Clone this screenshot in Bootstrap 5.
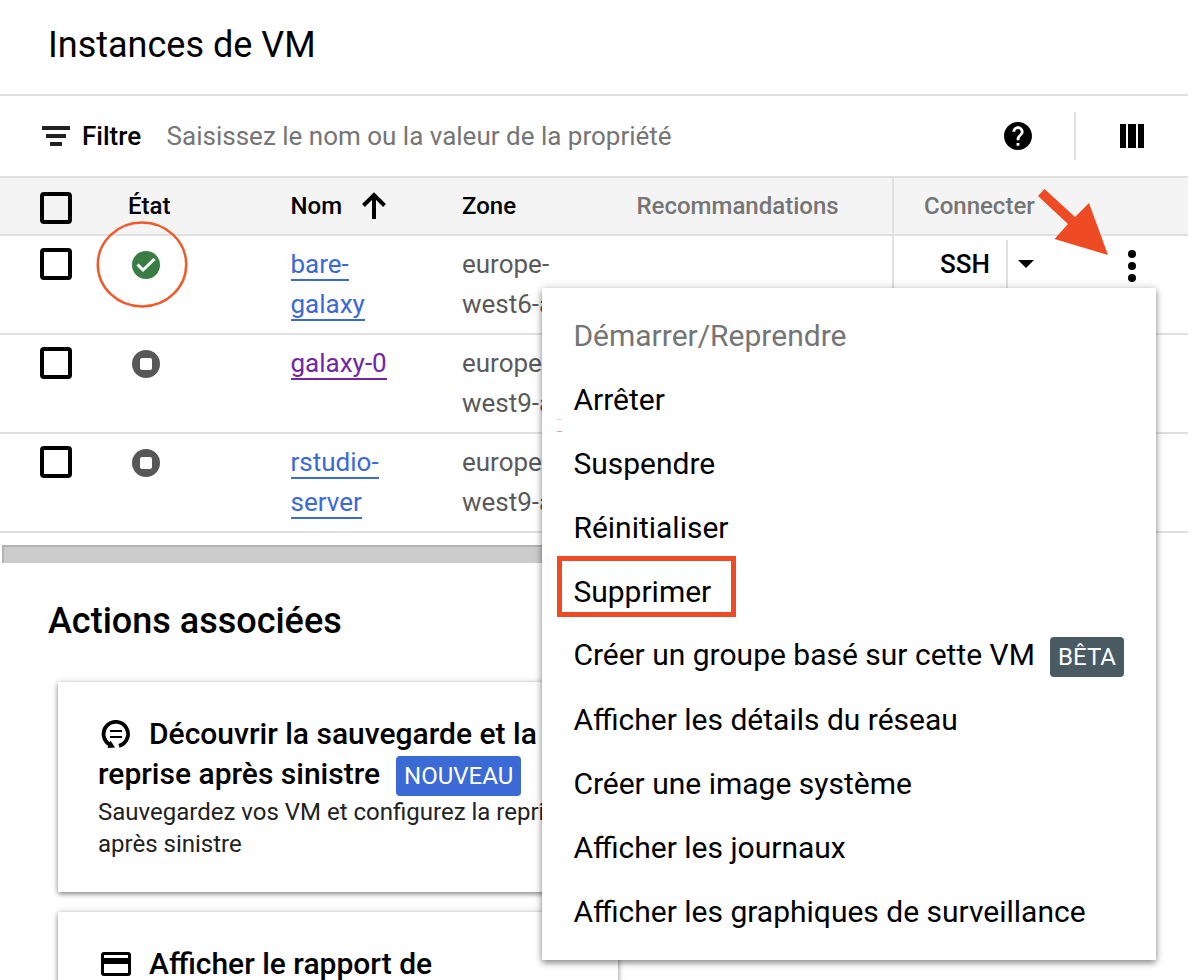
<!DOCTYPE html>
<html lang="fr">
<head>
<meta charset="utf-8">
<meta name="viewport" content="width=device-width, initial-scale=1">
<title>Instances de VM</title>
<link rel="stylesheet" href="https://cdn.jsdelivr.net/npm/bootstrap@5.3.0/dist/css/bootstrap.min.css">
<style>
body{font-family:Roboto,sans-serif;color:#000;background:#fff;height:980px;overflow:hidden}
.page{width:1188px;height:980px}
.rule{border-bottom:2px solid #e0e0e0}
.head{height:96px;padding:0 0 5px 48px}
.ttl{font-size:36px;font-weight:400;line-height:44px}
.filter{height:82px;padding-left:42px;font-size:26px}
.flabel{font-weight:500;margin-left:12px}
.ph{color:#757575;margin-left:25.5px}
.vsep{width:2px;height:48px;background:#e0e0e0;margin:0 44px 0 42px}
.vm{table-layout:fixed;width:1188px;border-collapse:separate;border-spacing:0}
.vm th{height:58px;background:#f4f4f4;border-bottom:2px solid #e0e0e0;font-size:24px;font-weight:500;line-height:36px;padding:0;vertical-align:middle}
.vm td{height:99px;border-bottom:2px solid #e0e0e0;font-size:26px;line-height:40px;padding:8px 0 0;vertical-align:top;color:#5a5a5a}
.vm .conn{border-left:2px solid #e0e0e0}
.vm th.dim{color:#757575}
.vm th.conn{padding-left:30px}
.cb{display:block;width:32px;height:32px;border:4px solid #000;border-radius:4px;margin:4px 0 0 40px}
.st{display:block;margin:7px 0 0 4px}
.lnk{color:#3b69d6;text-decoration:none;border-bottom:2px solid #3b69d6}
.lnk.seen{color:#7127a5;border-color:#7127a5}
.ssh{color:#000;font-weight:500;margin-left:46px;width:66px}
.split{width:2px;height:54px;margin-top:-4px;background:#e0e0e0}
.hbar{width:900px;height:18px;margin:12px 0 0 2px;background:#ccc;border-top:2px solid #b3b3b3;border-left:2px solid #b3b3b3}
.sub{font-size:36px;font-weight:500;line-height:44px;margin:36px 0 0 48px}
.tile{width:560px;height:210px;margin:20px 0 0 58px;background:#fff;box-shadow:0 2px 5px rgba(0,0,0,.42),0 0 9px rgba(0,0,0,.12);padding:32px 20px 0 40px;border-radius:1px}
.sub + .tile{margin-top:39px}
.tile h3{font-size:30px;font-weight:500;line-height:40px;margin:0;white-space:nowrap}
.tile h3 svg{margin:-4px 18px 0 3px}
.tile p{font-size:24px;line-height:32px;color:#212121;margin:2px 0 0}
.tag{display:inline-block;font-size:24px;font-weight:400;line-height:40px;height:40px;padding:0 8px;border-radius:4px;color:#fff;margin-left:16px}
.tag-new{background:#3b69d6;vertical-align:top;margin-top:2px;margin-bottom:-2px}
.ctx{left:542px;top:288px;width:614px;height:672px;background:#fff;padding:16px 0;box-shadow:0 3px 6px rgba(0,0,0,.4),0 0 10px rgba(0,0,0,.14);z-index:2}
.ctx li{height:64px;line-height:64px;font-size:30px;padding-left:31.4px;white-space:nowrap}
.ctx li.d-flex{line-height:62px;align-items:flex-start}
.tag-beta{background:#495a62;margin:13px 0 0 15.2px}
.ctx .off{color:#757575}
.marks{left:0;top:0;z-index:3;pointer-events:none}
</style>
</head>
<body>
<div class="page position-relative overflow-hidden">
  <header class="head rule d-flex align-items-center"><h1 class="ttl m-0">Instances de VM</h1></header>
  <div class="filter rule d-flex align-items-center">
    <svg width="28" height="20" viewBox="0 0 28 20" fill="#212121"><path d="M0 0h28v4H0zM4 8h20v4H4zM8 16h12v4H8z"/></svg>
    <span class="flabel">Filtre</span>
    <span class="ph">Saisissez le nom ou la valeur de la propriété</span>
    <div class="d-flex align-items-center ms-auto">
      <svg width="28" height="28" viewBox="2 2 20 20"><path d="M12 2C6.480 2 2 6.480 2 12s4.480 10 10 10 10-4.480 10-10S17.520 2 12 2zm1 17h-2v-2h2v2zm2.070-7.750-.9.920C13.450 12.900 13 13.500 13 15h-2v-.5c0-1.100.450-2.100 1.170-2.830l1.240-1.260c.370-.360.590-.860.590-1.410 0-1.100-.9-2-2-2s-2 .9-2 2H8c0-2.210 1.790-4 4-4s4 1.790 4 4c0 .880-.360 1.680-.930 2.250z"/></svg>
      <div class="vsep"></div>
      <svg width="24" height="24" viewBox="0 0 24 24" style="margin-right:44px"><path d="M0 0h6v24H0zM8 0h8v24H8zM18 0h6v24h-6z"/></svg>
    </div>
  </div>
  <table class="vm">
    <colgroup><col style="width:128px"><col style="width:162.500px"><col style="width:171.500px"><col style="width:174.500px"><col style="width:255.500px"><col></colgroup>
    <thead><tr>
      <th><span class="cb"></span></th><th>État</th>
      <th>Nom<svg width="24" height="27" viewBox="0 0 24 27" fill="none" stroke="#000" stroke-width="4" style="margin:-3px 0 1px 20px"><path d="M12 27V4M1.500 13.500 12 3l10.500 10.500"/></svg></th>
      <th>Zone</th><th class="dim">Recommandations</th><th class="dim conn">Connecter</th>
    </tr></thead>
    <tbody>
      <tr><td><span class="cb"></span></td>
        <td><svg class="st" width="28" height="28" viewBox="0 0 28 28"><circle cx="14" cy="14" r="14" fill="#3a7d44"/><path d="M5.500 13.500 11 19 22.500 8" fill="none" stroke="#fff" stroke-width="3"/></svg></td>
        <td><span class="lnk">bare-</span><br><span class="lnk">galaxy</span></td><td>europe-<br>west6-a</td><td></td>
        <td class="conn"><div class="d-flex"><span class="ssh">SSH</span><span class="split"></span>
          <svg width="16" height="8" viewBox="0 0 16 8" style="margin:16px 0 0 10px"><path d="M0 0h16L8 8z"/></svg>
          <svg width="8" height="32" viewBox="0 0 8 32" style="margin:6px 0 0 94px"><circle cx="4" cy="4" r="4"/><circle cx="4" cy="16" r="4"/><circle cx="4" cy="28" r="4"/></svg></div></td></tr>
      <tr><td><span class="cb"></span></td>
        <td><svg class="st" width="28" height="28" viewBox="0 0 28 28"><circle cx="14" cy="14" r="14" fill="#575757"/><rect x="8" y="8" width="12" height="12" rx="2" fill="#fff"/></svg></td>
        <td><span class="lnk seen">galaxy-0</span></td><td>europe-<br>west9-a</td><td></td><td class="conn"></td></tr>
      <tr><td><span class="cb"></span></td>
        <td><svg class="st" width="28" height="28" viewBox="0 0 28 28"><circle cx="14" cy="14" r="14" fill="#575757"/><rect x="8" y="8" width="12" height="12" rx="2" fill="#fff"/></svg></td>
        <td><span class="lnk">rstudio-</span><br><span class="lnk">server</span></td><td>europe-<br>west9-a</td><td></td><td class="conn"></td></tr>
    </tbody>
  </table>
  <div class="hbar"></div>
  <h2 class="sub">Actions associées</h2>
  <section class="tile">
    <h3><svg width="30" height="30" viewBox="0 0 30 30" fill="none" stroke="#000"><path d="M18 26.800A12.200 12.200 0 1 0 9.500 26" stroke-width="3.800"/><path d="M6.500 29 9.500 21.500l4.500 7z" fill="#000" stroke="none"/><path d="M9 12h12M9 18h12" stroke-width="2"/></svg>Découvrir la sauvegarde et la<br>reprise après sinistre<span class="tag tag-new">NOUVEAU</span></h3>
    <p class="text-nowrap">Sauvegardez vos VM et configurez la reprise<br>après sinistre</p>
  </section>
  <section class="tile">
    <h3><svg width="30" height="24" viewBox="0 0 30 24"><path fill-rule="evenodd" d="M3 0h24a3 3 0 0 1 3 3v18a3 3 0 0 1-3 3H3a3 3 0 0 1-3-3V3a3 3 0 0 1 3-3zM3 3v3h24V3zM3 12v9h24v-9z"/></svg>Afficher le rapport de</h3>
  </section>

  <ul class="ctx position-absolute list-unstyled m-0">
    <li class="off">Démarrer/Reprendre</li>
    <li>Arrêter</li>
    <li>Suspendre</li>
    <li>Réinitialiser</li>
    <li>Supprimer</li>
    <li class="d-flex">Créer un groupe basé sur cette VM<span class="tag tag-beta">BÊTA</span></li>
    <li>Afficher les détails du réseau</li>
    <li>Créer une image système</li>
    <li>Afficher les journaux</li>
    <li>Afficher les graphiques de surveillance</li>
  </ul>
  <svg class="marks position-absolute" width="1188" height="980" viewBox="0 0 1188 980">
    <ellipse cx="142" cy="264.500" rx="44.200" ry="42" fill="none" stroke="#f05a2a" stroke-width="2.500"/>
    <path fill="#ee4a23" d="M1044.500 189 1075 217l14-14 19 52-53.500-16L1068 224l-30-28z"/>
    <rect x="559.500" y="558.500" width="174" height="56" fill="none" stroke="#ee4a23" stroke-width="5"/>
    <path d="M557 419h5v1h-5z" fill="#f0d0cc"/><path d="M557 431h5v1h-5z" fill="#e0a198"/>
  </svg>
</div>
<script src="https://cdn.jsdelivr.net/npm/bootstrap@5.3.0/dist/js/bootstrap.bundle.min.js"></script>
</body>
</html>
